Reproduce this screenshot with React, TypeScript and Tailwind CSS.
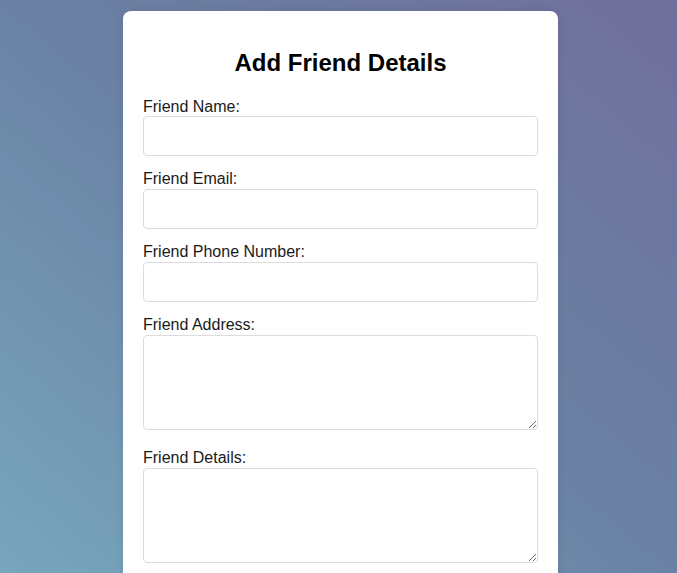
export default function App() {
  const field = "block w-full rounded-[4px] border border-[#dcdcdc] bg-white px-[10px] py-[10px] text-base outline-none";
  const label = "block text-base leading-[18px] text-[#1a1a1a]";

  return (
    <div
      className="flex h-[573px] justify-center overflow-hidden bg-[linear-gradient(to_top_right,#78a6be_0%,#6a82a4_50%,#706f9b_100%)] pl-[4px]"
      style={{ fontFamily: '"Liberation Sans", Arial, sans-serif' }}
    >
      <div className="mt-[11px] h-fit w-[435px] rounded-lg bg-white px-5 pt-[18px] pb-5 shadow-[0_0_10px_rgba(0,0,0,0.08)]">
        <h2 className="mt-5 mb-[21px] text-center text-2xl leading-[28px] font-bold text-black">Add Friend Details</h2>
        <form className="flex flex-col">
          <label className={label}>Friend Name:</label>
          <input type="text" className={`${field} mb-[14px] h-[40px]`} />
          <label className={label}>Friend Email:</label>
          <input type="email" className={`${field} mt-[1px] mb-[14px] h-[40px]`} />
          <label className={label}>Friend Phone Number:</label>
          <input type="tel" className={`${field} mt-[1px] mb-[14px] h-[40px]`} />
          <label className={label}>Friend Address:</label>
          <textarea className={`${field} mt-[1px] mb-[19px] h-[95px] resize-y`} />
          <label className={label}>Friend Details:</label>
          <textarea className={`${field} mt-[1px] mb-[20px] h-[95px] resize-y`} />
        </form>
      </div>
    </div>
  );
}
